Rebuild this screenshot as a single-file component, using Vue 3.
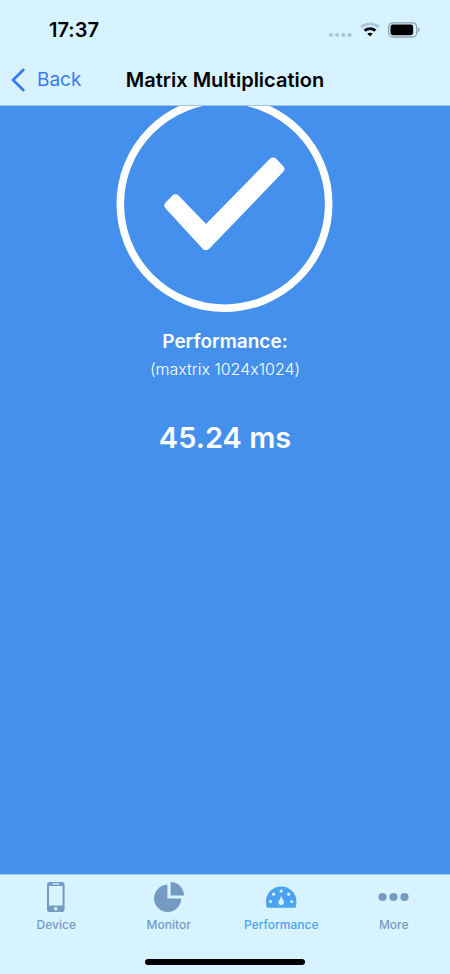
<script setup>
import { ref } from 'vue'

const active = ref('Performance')
const tabs = ['Device', 'Monitor', 'Performance', 'More']
</script>

<template>
  <div class="screen">
    <header class="top">
      <div class="status">
        <time class="clock">17:37</time>
        <div class="indicators">
          <svg class="signal" viewBox="0 0 24 20" aria-hidden="true">
            <circle cx="3" cy="15" r="2.1" />
            <circle cx="9.2" cy="15" r="2.1" />
            <circle cx="15.4" cy="15" r="2.1" />
            <circle cx="21.6" cy="15" r="2.1" />
          </svg>
          <svg class="wifi" viewBox="0 0 20 20" aria-hidden="true">
            <path class="faint" d="M1.2 7.2C6.2 2.7 13.8 2.7 18.8 7.2" />
            <path d="M4.6 10.7C7.8 8 12.2 8 15.4 10.7" />
            <path class="dot" d="M7.2 13.6C8.8 12.3 11.2 12.3 12.8 13.6L10 16.6Z" />
          </svg>
          <svg class="battery" viewBox="0 0 32 20" aria-hidden="true">
            <rect class="shell" x="0.7" y="2.8" width="28" height="14.2" rx="4.2" />
            <rect x="2.5" y="4.6" width="22.7" height="10.6" rx="2.4" />
            <path class="tip" d="M30 7.6C32 8.4 32 11.4 30 12.2Z" />
          </svg>
        </div>
      </div>
      <div class="navbar">
        <button class="back" type="button">
          <svg viewBox="0 0 14 24" aria-hidden="true"><path d="M12.2 2L2 12L12.2 22" /></svg>
          Back
        </button>
        <h1>Matrix Multiplication</h1>
      </div>
    </header>

    <main>
      <svg class="check" viewBox="0 0 216 216" aria-hidden="true">
        <circle cx="107.5" cy="108" r="104.2" />
        <path d="M52 109.5L58.5 102.8L89 134.4L156.2 66L162.8 73L89 149.7Z" />
      </svg>
      <h2>Performance:</h2>
      <p class="size">(maxtrix 1024x1024)</p>
      <p class="result">45.24 ms</p>
    </main>

    <footer>
      <nav>
        <button
          v-for="tab in tabs"
          :key="tab"
          type="button"
          class="tab"
          :class="{ active: active === tab }"
          @click="active = tab"
        >
          <svg v-if="tab === 'Device'" viewBox="0 0 32 32" aria-hidden="true">
            <path
              fill-rule="evenodd"
              d="M9.8 1H21.8Q24.6 1 24.6 3.8V28.2Q24.6 31 21.8 31H9.8Q7 31 7 28.2V3.8Q7 1 9.8 1ZM9 5V24.4H22.6V5ZM12.5 2.3V3.5H19.2V2.3ZM15.8 26A1.7 1.7 0 1 0 15.8 29.4A1.7 1.7 0 1 0 15.8 26Z"
            />
          </svg>
          <svg v-else-if="tab === 'Monitor'" viewBox="0 0 32 32" aria-hidden="true">
            <path d="M14.4 3.8A13.6 13.6 0 1 0 28.2 17.4H14.4Z" />
            <path d="M17.6 1A13.6 13.6 0 0 1 31 14.6H17.6Z" />
          </svg>
          <svg v-else-if="tab === 'Performance'" viewBox="0 0 32 32" aria-hidden="true">
            <path
              d="M1.9 26.7Q1 24.4 1 20.6A15.2 15.2 0 0 1 31.4 20.6Q31.4 24.4 30.5 26.7Z"
            />
            <g class="hole">
              <circle cx="5.6" cy="20.5" r="1.6" />
              <circle cx="8.6" cy="13.2" r="1.6" />
              <circle cx="16.1" cy="10" r="1.6" />
              <circle cx="23.6" cy="13.2" r="1.6" />
              <circle cx="26.7" cy="20.5" r="1.6" />
              <path d="M16.2 14.7Q17 17.5 18.4 19.7C20 22.2 18.2 24 16.2 24S12.4 22.2 14 19.7Q15.4 17.5 16.2 14.7Z" />
            </g>
          </svg>
          <svg v-else viewBox="0 0 32 32" aria-hidden="true">
            <circle cx="4.5" cy="16" r="4.1" />
            <circle cx="15.5" cy="16" r="4.1" />
            <circle cx="26.5" cy="16" r="4.1" />
          </svg>
          <span>{{ tab }}</span>
        </button>
      </nav>
      <div class="home"></div>
    </footer>
  </div>
</template>

<style>
body {
  margin: 0;
}
</style>

<style scoped>
.screen {
  display: flex;
  flex-direction: column;
  min-height: 100vh;
  background: #4490ec;
  font-family: Inter, 'Liberation Sans', sans-serif;
  font-feature-settings: 'calt' 0;
}

h1,
h2,
p {
  margin: 0;
}

button {
  padding: 0;
  border: 0;
  background: none;
  font: inherit;
  font-feature-settings: inherit;
  cursor: pointer;
}

.top {
  position: relative;
  background: #d7f3ff;
  border-bottom: 1px solid #9fc5e0;
}

.status {
  display: flex;
  align-items: center;
  justify-content: space-between;
  height: 52px;
  padding: 8px 30px 0 49px;
  box-sizing: border-box;
}

.clock {
  font-size: 20px;
  font-weight: 600;
  line-height: 24px;
}

.indicators {
  display: flex;
  align-items: center;
  gap: 8px;
}

.indicators svg {
  height: 20px;
}

.signal {
  width: 24px;
  fill: #aec4dc;
}

.wifi {
  width: 20px;
  fill: none;
  stroke: #000;
  stroke-width: 2.9;
}

.wifi .faint {
  stroke: #aec4dc;
}

.wifi .dot {
  fill: #000;
  stroke: none;
}

.battery {
  width: 32px;
}

.battery .shell {
  fill: none;
  stroke: #8fa3b3;
  stroke-width: 1.3;
}

.battery .tip {
  fill: #8fa3b3;
}

.navbar {
  display: grid;
  grid-template-columns: 1fr auto 1fr;
  align-items: center;
  height: 53px;
  padding: 2px 11px 0;
  box-sizing: border-box;
}

.back {
  display: flex;
  align-items: center;
  gap: 12px;
  color: #387af8;
  font-size: 19px;
  line-height: 24px;
}

.back svg {
  width: 14px;
  height: 24px;
  fill: none;
  stroke: currentColor;
  stroke-width: 2.8;
  stroke-linecap: round;
  stroke-linejoin: round;
}

h1 {
  font-size: 20px;
  font-weight: 600;
  line-height: 24px;
}

main {
  flex: 1;
  display: flex;
  flex-direction: column;
  align-items: center;
  overflow: hidden;
  color: #fff;
  text-align: center;
}

.check {
  flex: none;
  width: 216px;
  height: 216px;
  margin-top: -10px;
  overflow: visible;
  fill: none;
  stroke: #fff;
  stroke-width: 7.6;
}

.check path {
  fill: #fff;
  stroke-width: 9;
  stroke-linejoin: round;
}

h2 {
  margin-top: 18px;
  font-size: 19px;
  font-weight: 600;
  line-height: 24px;
}

.size {
  margin-top: 3px;
  font-size: 16px;
  font-weight: 300;
  line-height: 24px;
}

.result {
  margin-top: 39px;
  font-size: 29px;
  font-weight: 600;
  line-height: 36px;
}

footer {
  display: flex;
  flex-direction: column;
  align-items: center;
  justify-content: space-between;
  height: 100px;
  box-sizing: border-box;
  padding-bottom: 9px;
  border-top: 1px solid #9ccaf5;
  background: #d7f3ff;
}

nav {
  display: grid;
  grid-template-columns: repeat(4, 1fr);
  width: 100%;
}

.tab {
  display: flex;
  flex-direction: column;
  align-items: center;
  gap: 4px;
  padding-top: 6px;
  color: #759bc3;
  font-size: 12px;
  font-weight: 500;
  line-height: 16px;
}

.tab.active {
  color: #4ba3f2;
}

.tab svg {
  width: 32px;
  height: 32px;
  fill: currentColor;
}

.tab .hole {
  fill: #d7f3ff;
}

.home {
  width: 160px;
  height: 6px;
  border-radius: 3px;
  background: #000;
}
</style>
